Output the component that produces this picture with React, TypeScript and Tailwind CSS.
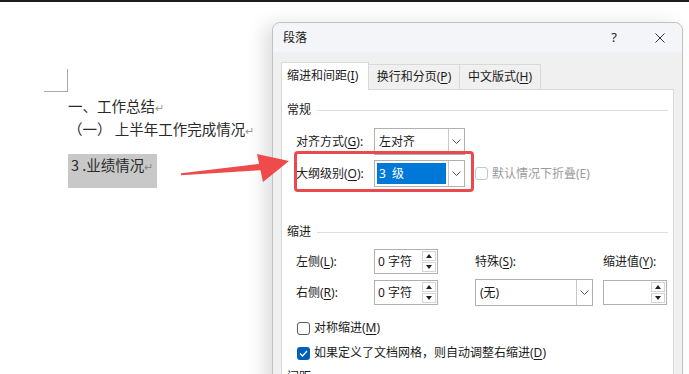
const ui = "font-['Noto_Sans','Noto_Sans_CJK_SC',sans-serif]";

function K({ k }: { k: string }) {
  return <span className="underline underline-offset-2">{k}</span>;
}

function Chevron() {
  return (
    <svg width="9" height="5" viewBox="0 0 9 5">
      <path d="M0.5 0.5 L4.5 4.5 L8.5 0.5" fill="none" stroke="#555" strokeWidth="1" />
    </svg>
  );
}

function Spinner() {
  return (
    <div className="flex flex-col w-[14px] h-[21px] mr-[1px] gap-px">
      <div className="flex-1 flex items-center justify-center border border-[#d4d4d4]">
        <svg width="6" height="4" viewBox="0 0 6 4">
          <path d="M0 4 L3 0 L6 4 Z" fill="#222" />
        </svg>
      </div>
      <div className="flex-1 flex items-center justify-center border border-[#d4d4d4]">
        <svg width="6" height="4" viewBox="0 0 6 4">
          <path d="M0 0 L3 4 L6 0 Z" fill="#222" />
        </svg>
      </div>
    </div>
  );
}

function SpinBox({ value }: { value: string }) {
  return (
    <div className="w-[64px] h-[25px] border border-[#b0b0b0] bg-white flex items-center">
      <span className="flex-1 pl-[3px] text-[12px] leading-none">{value}</span>
      <Spinner />
    </div>
  );
}

function Select({ w, children }: { w: string; children: React.ReactNode }) {
  return (
    <div className={`${w} h-[27px] border border-[#b0b0b0] bg-white flex items-stretch`}>
      <div className="flex-1 flex items-center p-[2px]">{children}</div>
      <div className="w-[16px] border-l border-[#c8c8c8] flex items-center justify-center">
        <Chevron />
      </div>
    </div>
  );
}

function Header({ title }: { title: string }) {
  return (
    <div className="h-[20px] flex items-center pl-[5px] pr-[5px]">
      <span className="text-[12px] text-[#1a1a1a]">{title}</span>
      <div className="flex-1 h-px bg-[#dedede] ml-[6px]" />
    </div>
  );
}

function Doc() {
  return (
    <div className="w-[272px] shrink-0 pl-[44px] pt-[67px] font-['Noto_Sans_CJK_SC',sans-serif] text-[14.5px] leading-[22px] text-[#2a2a2a]">
      <div className="w-[24px] h-[23px] border-r border-b border-[#a8a8a8]" />
      <div className="ml-[24px]">
        <div className="mt-[3px] whitespace-nowrap">
          一、工作总结<span className="text-[11px] text-[#9a9a9a]">↵</span>
        </div>
        <div className="whitespace-nowrap">
          （一） 上半年工作完成情况<span className="text-[11px] text-[#9a9a9a]">↵</span>
        </div>
        <div className="mt-[13px] w-[89px] h-[34px] bg-[#c8c8c8] pl-[3px] whitespace-nowrap">
          3 .业绩情况<span className="text-[11px] text-[#8a8a8a]">↵</span>
        </div>
      </div>
    </div>
  );
}

function Dialog() {
  return (
    <div className={`${ui} w-[411px] h-[400px] shrink-0 mt-[20px] border border-[#c2c2c2] rounded-t-[8px] bg-[#f0f0f0] shadow-[-8px_2px_18px_rgba(0,0,0,0.13)] flex flex-col text-[#1a1a1a]`}>
      <div className="h-[29px] flex items-center pl-[10px] pr-[17px] bg-[#f3f5f8] rounded-t-[8px] text-[12px]">
        <span className="flex-1">段落</span>
        <span className="text-[13px] mr-[38px]">?</span>
        <svg width="10" height="10" viewBox="0 0 10 10">
          <path d="M0.5 0.5 L9.5 9.5 M9.5 0.5 L0.5 9.5" stroke="#333" strokeWidth="1" />
        </svg>
      </div>
      <div className="mt-[10px] pl-[8px] flex items-end h-[28px] relative z-10 text-[12px]">
        <div className="w-[88px] h-[28px] bg-white border border-b-0 border-[#d9d9d9] flex items-center pl-[5px] pb-[1px]">
          缩进和间距(<K k="I" />)
        </div>
        <div className="w-[91px] h-[26px] border-t border-r border-[#d9d9d9] flex items-center justify-center pb-[1px]">
          换行和分页(<K k="P" />)
        </div>
        <div className="w-[81px] h-[26px] border-t border-r border-[#d9d9d9] flex items-center justify-center pb-[1px]">
          中文版式(<K k="H" />)
        </div>
      </div>
      <div className="mx-[8px] -mt-px flex-1 border border-[#d9d9d9] bg-white flex flex-col text-[12px]">
        <div className="mt-[10px]">
          <Header title="常规" />
        </div>
        <div className="mt-[8px] h-[27px] pl-[14px] flex items-center">
          <span className="w-[78px]">
            对齐方式(<K k="G" />):
          </span>
          <Select w="w-[91px]">
            <span className="pl-[2px]">左对齐</span>
          </Select>
        </div>
        <div className="relative mt-[5px] h-[27px] pl-[14px] flex items-center">
          <span className="w-[78px]">
            大纲级别(<K k="O" />):
          </span>
          <Select w="w-[91px]">
            <span className="flex-1 h-full bg-[#0078d7] text-white flex items-center pl-[2px] whitespace-pre">3  级</span>
          </Select>
          <div className="ml-[10px] w-[13px] h-[13px] rounded-[3px] border border-[#c6c6c6]" />
          <span className="ml-[4px] text-[#9c9c9c]">默认情况下折叠(E)</span>
          <div className="absolute left-[12px] top-[-9px] w-[180px] h-[41px] border-[3px] border-[#ea4a4e] rounded-[4px]" />
        </div>
        <div className="mt-[35px]">
          <Header title="缩进" />
        </div>
        <div className="mt-[7px] h-[25px] pl-[14px] flex items-center">
          <span className="w-[78px]">
            左侧(<K k="L" />):
          </span>
          <SpinBox value="0 字符" />
          <span className="ml-[37px] w-[128px]">
            特殊(<K k="S" />):
          </span>
          <span>
            缩进值(<K k="Y" />):
          </span>
        </div>
        <div className="mt-[5px] h-[27px] pl-[14px] flex items-center">
          <span className="w-[78px]">
            右侧(<K k="R" />):
          </span>
          <SpinBox value="0 字符" />
          <div className="ml-[37px]">
            <Select w="w-[118px]">
              <span className="pl-[2px]">(无)</span>
            </Select>
          </div>
          <div className="ml-[10px]">
            <SpinBox value="" />
          </div>
        </div>
        <div className="mt-[12px] h-[20px] pl-[15px] flex items-center">
          <div className="w-[13px] h-[13px] rounded-[3px] border border-[#5a5a5a]" />
          <span className="ml-[4px]">
            对称缩进(<K k="M" />)
          </span>
        </div>
        <div className="mt-[5px] h-[20px] pl-[15px] flex items-center">
          <div className="w-[13px] h-[13px] rounded-[3px] bg-[#005fb8] flex items-center justify-center">
            <svg width="9" height="7" viewBox="0 0 9 7">
              <path d="M1 3.5 L3.5 6 L8 1" fill="none" stroke="#fff" strokeWidth="1.3" />
            </svg>
          </div>
          <span className="ml-[4px]">
            如果定义了文档网格，则自动调整右缩进(<K k="D" />)
          </span>
        </div>
        <div className="mt-[4px]">
          <Header title="间距" />
        </div>
      </div>
    </div>
  );
}

export default function App() {
  return (
    <div className="relative w-[689px] h-[374px] overflow-hidden bg-white flex flex-col">
      <div className="h-[2px] bg-[#1c1c1c] shrink-0" />
      <div className="flex flex-1 min-h-0">
        <Doc />
        <Dialog />
      </div>
      <svg className="absolute inset-0 z-20 pointer-events-none" width="689" height="374" viewBox="0 0 689 374">
        <polygon points="181,173.2 262,163.5 263,170 181,175.2" fill="#ee4b4b" />
        <polygon points="257,154 289,161 263,182" fill="#ee4b4b" />
      </svg>
    </div>
  );
}
